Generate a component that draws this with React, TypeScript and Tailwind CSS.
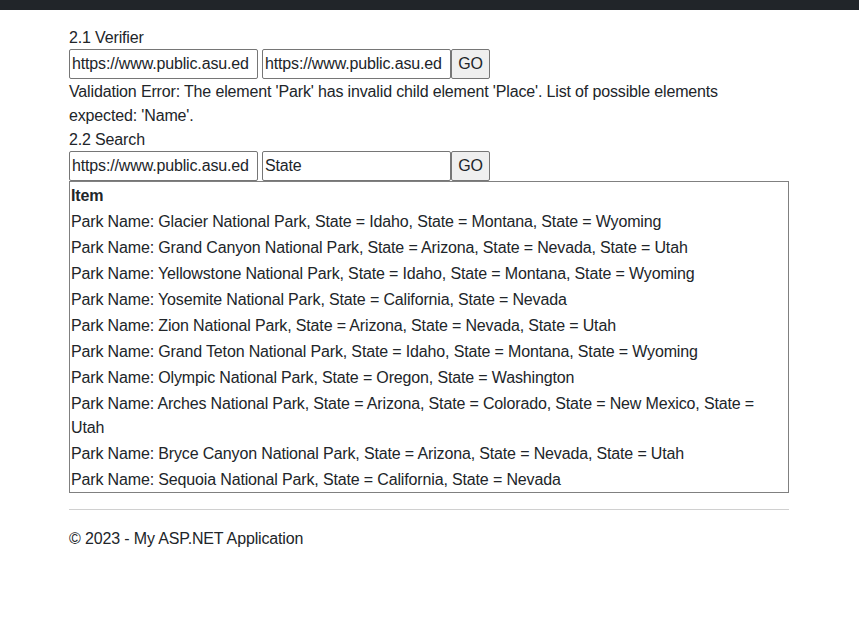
import React from "react";

const parks = [
  "Park Name: Glacier National Park, State = Idaho, State = Montana, State = Wyoming",
  "Park Name: Grand Canyon National Park, State = Arizona, State = Nevada, State = Utah",
  "Park Name: Yellowstone National Park, State = Idaho, State = Montana, State = Wyoming",
  "Park Name: Yosemite National Park, State = California, State = Nevada",
  "Park Name: Zion National Park, State = Arizona, State = Nevada, State = Utah",
  "Park Name: Grand Teton National Park, State = Idaho, State = Montana, State = Wyoming",
  "Park Name: Olympic National Park, State = Oregon, State = Washington",
  "Park Name: Arches National Park, State = Arizona, State = Colorado, State = New Mexico, State = Utah",
  "Park Name: Bryce Canyon National Park, State = Arizona, State = Nevada, State = Utah",
  "Park Name: Sequoia National Park, State = California, State = Nevada",
];

function Field({ value }: { value: string }) {
  return (
    <input
      readOnly
      value={value}
      className="h-[30px] w-[189px] border border-[#767676] rounded-[2px] px-[2px] text-[16px] tracking-[-0.15px] text-[#212529] bg-white outline-none"
      style={{ fontFamily: "inherit" }}
    />
  );
}

function Go() {
  return (
    <button className="h-[30px] w-[39px] border border-[#767676] rounded-[2px] bg-[#efefef] text-[16px] text-[#212529] flex items-center justify-center">
      GO
    </button>
  );
}

export default function App() {
  return (
    <div
      className="min-h-[634px] bg-white text-[#212529] text-[16px] leading-6 tracking-[-0.15px]"
      style={{ fontFamily: '"Segoe UI", "Liberation Sans", Arial, sans-serif' }}
    >
      <div className="h-[10px] bg-[#212529]" />
      <div className="mx-auto w-[751px] pl-[15px] pr-[16px] pt-[15px]">
        <div className="pt-[1px] -mb-[1px]">2.1 Verifier</div>
        <div className="flex">
          <Field value="https://www.public.asu.ed" />
          <div className="w-[4px]" />
          <Field value="https://www.public.asu.ed" />
          <Go />
        </div>
        <div className="pt-[1px] -mb-[1px]">
          Validation Error: The element 'Park' has invalid child element 'Place'. List of possible elements expected: 'Name'.
        </div>
        <div className="pt-[1px] -mb-[1px]">2.2 Search</div>
        <div className="flex">
          <Field value="https://www.public.asu.ed" />
          <div className="w-[4px]" />
          <Field value="State" />
          <Go />
        </div>
        <table className="w-full border border-[#808080] border-separate border-spacing-0">
          <thead>
            <tr>
              <th className="p-[1px] pt-[2px] pb-0 text-left font-bold">Item</th>
            </tr>
          </thead>
          <tbody>
            {parks.map((p) => (
              <tr key={p}>
                <td className="p-[1px] pt-[2px] pb-0">{p}</td>
              </tr>
            ))}
          </tbody>
        </table>
        <hr className="my-4 border-t border-[#d0d0d0]" />
        <footer>
          <p className="pt-[1px]">© 2023 - My ASP.NET Application</p>
        </footer>
      </div>
    </div>
  );
}
